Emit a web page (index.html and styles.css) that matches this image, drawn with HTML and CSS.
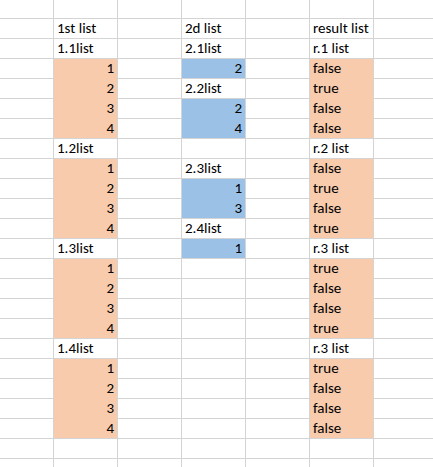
FILE: index.html
```html
<!DOCTYPE html>
<html>
<head>
<meta charset="utf-8">
<link rel="stylesheet" href="styles.css">
</head>
<body>
<div class="sheet">
<div class="c"></div><div class="c"></div><div class="c"></div><div class="c"></div><div class="c"></div><div class="c"></div><div class="c"></div>
<div class="c"></div><div class="c">1st list</div><div class="c"></div><div class="c">2d list</div><div class="c"></div><div class="c">result list</div><div class="c"></div>
<div class="c"></div><div class="c">1.1list</div><div class="c"></div><div class="c">2.1list</div><div class="c"></div><div class="c">r.1 list</div><div class="c"></div>
<div class="c"></div><div class="c n p j">1</div><div class="c"></div><div class="c n b">2</div><div class="c"></div><div class="c p j">false</div><div class="c"></div>
<div class="c"></div><div class="c n p j">2</div><div class="c"></div><div class="c">2.2list</div><div class="c"></div><div class="c p j">true</div><div class="c"></div>
<div class="c"></div><div class="c n p j">3</div><div class="c"></div><div class="c n b j">2</div><div class="c"></div><div class="c p j">false</div><div class="c"></div>
<div class="c"></div><div class="c n p">4</div><div class="c"></div><div class="c n b">4</div><div class="c"></div><div class="c p">false</div><div class="c"></div>
<div class="c"></div><div class="c">1.2list</div><div class="c"></div><div class="c"></div><div class="c"></div><div class="c">r.2 list</div><div class="c"></div>
<div class="c"></div><div class="c n p j">1</div><div class="c"></div><div class="c">2.3list</div><div class="c"></div><div class="c p j">false</div><div class="c"></div>
<div class="c"></div><div class="c n p j">2</div><div class="c"></div><div class="c n b j">1</div><div class="c"></div><div class="c p j">true</div><div class="c"></div>
<div class="c"></div><div class="c n p j">3</div><div class="c"></div><div class="c n b">3</div><div class="c"></div><div class="c p j">false</div><div class="c"></div>
<div class="c"></div><div class="c n p">4</div><div class="c"></div><div class="c">2.4list</div><div class="c"></div><div class="c p">true</div><div class="c"></div>
<div class="c"></div><div class="c">1.3list</div><div class="c"></div><div class="c n b">1</div><div class="c"></div><div class="c">r.3 list</div><div class="c"></div>
<div class="c"></div><div class="c n p j">1</div><div class="c"></div><div class="c"></div><div class="c"></div><div class="c p j">true</div><div class="c"></div>
<div class="c"></div><div class="c n p j">2</div><div class="c"></div><div class="c"></div><div class="c"></div><div class="c p j">false</div><div class="c"></div>
<div class="c"></div><div class="c n p j">3</div><div class="c"></div><div class="c"></div><div class="c"></div><div class="c p j">false</div><div class="c"></div>
<div class="c"></div><div class="c n p">4</div><div class="c"></div><div class="c"></div><div class="c"></div><div class="c p">true</div><div class="c"></div>
<div class="c"></div><div class="c">1.4list</div><div class="c"></div><div class="c"></div><div class="c"></div><div class="c">r.3 list</div><div class="c"></div>
<div class="c"></div><div class="c n p j">1</div><div class="c"></div><div class="c"></div><div class="c"></div><div class="c p j">true</div><div class="c"></div>
<div class="c"></div><div class="c n p j">2</div><div class="c"></div><div class="c"></div><div class="c"></div><div class="c p j">false</div><div class="c"></div>
<div class="c"></div><div class="c n p j">3</div><div class="c"></div><div class="c"></div><div class="c"></div><div class="c p j">false</div><div class="c"></div>
<div class="c"></div><div class="c n p">4</div><div class="c"></div><div class="c"></div><div class="c"></div><div class="c p">false</div><div class="c"></div>
<div class="c"></div><div class="c"></div><div class="c"></div><div class="c"></div><div class="c"></div><div class="c"></div><div class="c"></div>
<div class="c"></div><div class="c"></div><div class="c"></div><div class="c"></div><div class="c"></div><div class="c"></div><div class="c"></div>
</div>
</body>
</html>
```
FILE: styles.css
```css
html, body {
  margin: 0;
  padding: 0;
  background: #ffffff;
  overflow: hidden;
}
.sheet {
  display: grid;
  grid-template-columns: 54px repeat(6, 64px);
  grid-template-rows: 19px;
  grid-auto-rows: 20px;
  width: 433px;
  height: 467px;
  overflow: hidden;
  font-family: Carlito, Lato, "Liberation Sans", sans-serif;
  font-size: 15px;
  color: #000000;
}
.c {
  box-sizing: border-box;
  border-right: 1px solid #d4d4d4;
  border-bottom: 1px solid #d4d4d4;
  display: flex;
  align-items: flex-end;
  padding: 0 3px 1px 3px;
  line-height: 17px;
  white-space: nowrap;
}
.n {
  justify-content: flex-end;
}
.p {
  background: #f8cbad;
}
.b {
  background: #9bc2e6;
}
.j {
  border-bottom-color: transparent;
}
```
